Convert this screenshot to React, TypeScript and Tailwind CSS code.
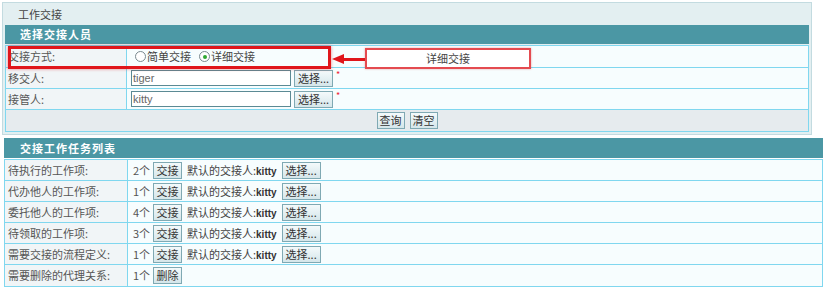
import React from 'react';

const font = "font-['Noto_Sans_CJK_SC','Liberation_Sans',sans-serif]";

function Btn({ children, className = '' }: { children: React.ReactNode; className?: string }) {
  return (
    <span
      className={`inline-flex items-center justify-center shrink-0 whitespace-nowrap h-[17px] px-0 border border-[#7fa9b3] bg-gradient-to-b from-[#f4fafb] to-[#d5e6ea] text-[11px] leading-none text-[#333] ${className}`}
    >
      {children}
    </span>
  );
}

function Radio({ checked }: { checked?: boolean }) {
  return (
    <span className="inline-flex items-center justify-center w-[11px] h-[11px] rounded-full border border-[#7a8a90] bg-white">
      {checked && <span className="w-[4px] h-[4px] rounded-full bg-[#2fa832]" />}
    </span>
  );
}

const tasks = [
  { label: '待执行的工作项:', count: '2个', pick: true },
  { label: '代办他人的工作项:', count: '1个', pick: true },
  { label: '委托他人的工作项:', count: '4个', pick: true },
  { label: '待领取的工作项:', count: '3个', pick: true },
  { label: '需要交接的流程定义:', count: '1个', pick: true },
  { label: '需要删除的代理关系:', count: '1个', pick: false },
];

export default function App() {
  return (
    <div className={`relative w-[825px] h-[289px] bg-white text-[11px] text-[#555] ${font}`}>
      {/* Section 1 */}
      <div className="absolute left-[2px] top-[2px] w-[810px] border border-[#c3dbe0] bg-[#e3eff1] pb-[2px]">
        <div className="h-[22px] flex items-center pl-[15px] text-[#444]">工作交接</div>
        <div className="mx-[2px]">
          <div className="h-[19px] flex items-center pl-[15px] bg-[#4b97a4] text-white font-bold tracking-[1px]">
            选择交接人员
          </div>
          <div className="mt-[1px] border border-[#80d7ef] grid grid-cols-[121px_1fr]">
            <div className="h-[22px] flex items-center pl-[2px] bg-[#f1f5f7] border-r border-b border-[#80d7ef]">交接方式:</div>
            <div className="h-[22px] flex items-center pl-[8px] gap-[1px] bg-[#f7fdfe] border-b border-[#80d7ef] text-[#444]">
              <Radio />
              <span>简单交接</span>
              <span className="ml-[6px]" />
              <Radio checked />
              <span>详细交接</span>
            </div>
            <div className="h-[21px] flex items-center pl-[2px] bg-[#f1f5f7] border-r border-b border-[#80d7ef]">移交人:</div>
            <div className="h-[21px] flex items-center pl-[4px] bg-[#f7fdfe] border-b border-[#80d7ef]">
              <span className="w-[160px] h-[16px] border border-[#5b8a94] bg-white flex items-center pl-[1px] text-[#666] font-['Liberation_Sans',sans-serif]">tiger</span>
              <Btn className="ml-[3px] w-[39px]">选择...</Btn>
              <span className="ml-[3px] -mt-[6px] text-[#e23] text-[9px]">*</span>
            </div>
            <div className="h-[21px] flex items-center pl-[2px] bg-[#f1f5f7] border-r border-b border-[#80d7ef]">接管人:</div>
            <div className="h-[21px] flex items-center pl-[4px] bg-[#f7fdfe] border-b border-[#80d7ef]">
              <span className="w-[160px] h-[16px] border border-[#5b8a94] bg-white flex items-center pl-[1px] text-[#666] font-['Liberation_Sans',sans-serif]">kitty</span>
              <Btn className="ml-[3px] w-[39px]">选择...</Btn>
              <span className="ml-[3px] -mt-[6px] text-[#e23] text-[9px]">*</span>
            </div>
            <div className="col-span-2 h-[21px] flex items-center justify-center gap-[5px] bg-[#e6ebee]">
              <Btn className="w-[28px]">查询</Btn>
              <Btn className="w-[28px]">清空</Btn>
            </div>
          </div>
        </div>
      </div>

      {/* Annotation */}
      <div className="absolute left-[8px] top-[46px] w-[323px] h-[23px] border-[3px] border-[#e0161b] shadow-[0_0_3px_rgba(224,22,27,0.5)]" />
      <div className="absolute left-[332px] top-[55px] w-[34px] h-[8px] flex items-center">
        <span className="w-0 h-0 border-y-[5px] border-y-transparent border-r-[12px] border-r-[#e0161b]" />
        <span className="flex-1 h-[3px] bg-[#e0161b]" />
      </div>
      <div className="absolute left-[365px] top-[48px] w-[166px] h-[21px] border-2 border-[#e44b50] bg-white flex items-center justify-center text-[#444] shadow-[0_0_2px_rgba(200,40,40,0.4)]">
        详细交接
      </div>

      {/* Section 2 */}
      <div className="absolute left-[4px] top-[138px] w-[819px]">
        <div className="h-[20px] flex items-center pl-[16px] bg-[#4b97a4] text-white font-bold tracking-[1px]">
          交接工作任务列表
        </div>
        <div className="mt-[1px] border border-[#80d7ef] grid grid-cols-[123px_1fr]">
          {tasks.map((t, i) => {
            const last = i === tasks.length - 1;
            return (
              <React.Fragment key={t.label}>
                <div className={`h-[21px] flex items-center pl-[3px] bg-[#f1f5f7] border-r border-[#80d7ef] ${last ? '' : 'border-b'}`}>
                  {t.label}
                </div>
                <div className={`h-[21px] flex items-center pl-[5px] bg-[#f7fdfe] border-[#80d7ef] ${last ? '' : 'border-b'}`}>
                  <span className="w-[20px]">{t.count}</span>
                  <Btn className="w-[29px]">{t.pick ? '交接' : '删除'}</Btn>
                  {t.pick && (
                    <>
                      <span className="ml-[5px] text-[#444] whitespace-nowrap">
                        默认的交接人:<b className="font-bold text-[#333] text-[10px] font-['Liberation_Sans',sans-serif]">kitty</b>
                      </span>
                      <Btn className="ml-[5px] w-[39px]">选择...</Btn>
                    </>
                  )}
                </div>
              </React.Fragment>
            );
          })}
        </div>
      </div>
    </div>
  );
}
